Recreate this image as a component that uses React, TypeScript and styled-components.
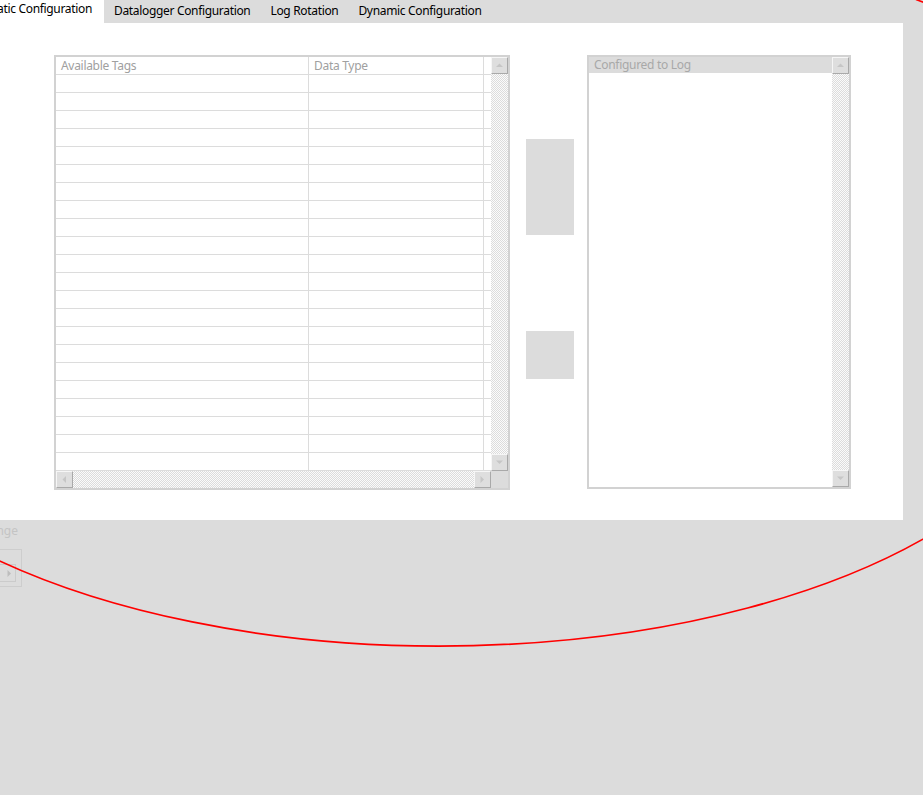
import React from 'react';
import styled, { createGlobalStyle, css } from 'styled-components';

const Global = createGlobalStyle`
  html, body { margin: 0; padding: 0; background: #dcdcdc; overflow: hidden; }
  body { font-family: "Noto Sans", "DejaVu Sans", sans-serif; font-size: 12px; }
  #root { width: 923px; height: 795px; position: relative; overflow: hidden; }
`;

const Page = styled.div`
  width: 923px;
  height: 795px;
  position: relative;
  display: flex;
  flex-direction: column;
  overflow: hidden;
`;

const TabBar = styled.div`
  display: flex;
  height: 23px;
  align-items: stretch;
`;

const Tab = styled.div<{ $active?: boolean }>`
  display: flex;
  align-items: flex-start;
  white-space: nowrap;
  color: #000;
  font-size: 12px;
  letter-spacing: -0.33px;
  line-height: 16px;
  box-sizing: border-box;
  ${(p) =>
    p.$active
      ? css`
          background: #fff;
          width: 104px;
          justify-content: flex-end;
          padding: 1px 12px 0 0;
          overflow: hidden;
        `
      : css`
          padding: 3px 10px 0 10px;
        `}
`;

const Panel = styled.div`
  width: 903px;
  height: 497px;
  box-sizing: border-box;
  background: #fff;
  padding: 32px 0 0 54px;
  display: flex;
  align-items: flex-start;
`;

const TableBox = styled.div`
  width: 456px;
  height: 435px;
  box-sizing: border-box;
  border: 2px solid #d2d2d2;
  display: grid;
  grid-template-columns: 435px 17px;
  grid-template-rows: 414px 17px;
  background: #fff;
`;

const Rows = styled.div`
  display: flex;
  flex-direction: column;
  overflow: hidden;
`;

const Row = styled.div`
  display: grid;
  grid-template-columns: 253px 175px 7px;
  height: 18px;
  flex: none;
`;

const Cell = styled.div<{ $last?: boolean }>`
  box-sizing: border-box;
  border-bottom: 1px solid #dcdcdc;
  border-right: ${(p) => (p.$last ? 'none' : '1px solid #dcdcdc')};
  padding-left: 5px;
  color: #a0a0a0;
  font-size: 12px;
  letter-spacing: -0.3px;
  line-height: 17px;
  white-space: nowrap;
  overflow: hidden;
`;

const checker = css`
  background-color: #fbfbfb;
  background-image: repeating-conic-gradient(#dcdcdc 0 25%, #fbfbfb 0 50%);
  background-size: 2px 2px;
`;

const VScroll = styled.div`
  display: flex;
  flex-direction: column;
`;

const HScroll = styled.div`
  display: flex;
  flex-direction: row;
`;

const Track = styled.div`
  flex: 1;
  ${checker}
`;

const ScrollButton = styled.div`
  width: 17px;
  height: 17px;
  flex: none;
  box-sizing: border-box;
  background: #dedede;
  border: 1px solid;
  border-color: #f6f6f6 #a9a9a9 #a9a9a9 #f6f6f6;
  display: flex;
  align-items: center;
  justify-content: center;
`;

const Corner = styled.div`
  background: #dcdcdc;
`;

const Middle = styled.div`
  margin: 0 13px 0 16px;
  padding-top: 84px;
  display: flex;
  flex-direction: column;
  gap: 96px;
`;

const GreyButton = styled.div<{ $h: number }>`
  width: 48px;
  height: ${(p) => p.$h}px;
  background: #dcdcdc;
`;

const ListBox = styled.div`
  width: 264px;
  height: 434px;
  box-sizing: border-box;
  border: 2px solid #d2d2d2;
  display: grid;
  grid-template-columns: 243px 17px;
  grid-template-rows: 430px;
  background: #fff;
`;

const ListArea = styled.div`
  display: flex;
  flex-direction: column;
`;

const ListHeader = styled.div`
  height: 16px;
  background: #dcdcdc;
  color: #a8a8a8;
  padding-left: 5px;
  font-size: 12px;
  letter-spacing: -0.3px;
  line-height: 16px;
  white-space: nowrap;
`;

const Bottom = styled.div`
  display: flex;
  flex-direction: column;
  width: 22px;
`;

const FadedLabel = styled.div`
  width: 18px;
  margin-top: 3px;
  display: flex;
  justify-content: flex-end;
  overflow: hidden;
  white-space: nowrap;
  color: #c4c4c4;
  font-size: 12px;
  line-height: 16px;
`;

const Frame = styled.div`
  margin-top: 10px;
  width: 22px;
  height: 38px;
  box-sizing: border-box;
  border: 1px solid #cdcdcd;
  border-left: none;
  padding-top: 14px;
`;

const SpinButton = styled.div`
  width: 16px;
  height: 18px;
  box-sizing: border-box;
  border: 1px solid #cbcbcb;
  border-left: none;
  display: flex;
  align-items: center;
  justify-content: flex-end;
  padding-right: 3px;
`;

const Overlay = styled.svg`
  position: absolute;
  left: 0;
  top: 0;
  pointer-events: none;
`;

type Dir = 'up' | 'down' | 'left' | 'right';

const Arrow: React.FC<{ dir: Dir; color?: string }> = ({ dir, color = '#c6c6c6' }) => {
  const pts: Record<Dir, string> = {
    up: '0,4 7,4 3.5,0.5',
    down: '0,0.5 7,0.5 3.5,4',
    left: '4,0 4,7 0.5,3.5',
    right: '0.5,0 0.5,7 4,3.5',
  };
  const vertical = dir === 'up' || dir === 'down';
  return (
    <svg width={vertical ? 7 : 5} height={vertical ? 5 : 7} viewBox={vertical ? '0 0 7 5' : '0 0 5 7'}>
      <polygon points={pts[dir]} fill={color} />
    </svg>
  );
};

const ROWS = 22;

export default function App() {
  return (
    <>
      <Global />
      <Page>
        <TabBar>
          <Tab $active>Static Configuration</Tab>
          <Tab>Datalogger Configuration</Tab>
          <Tab>Log Rotation</Tab>
          <Tab>Dynamic Configuration</Tab>
        </TabBar>
        <Panel>
          <TableBox>
            <Rows>
              <Row>
                <Cell>Available Tags</Cell>
                <Cell>Data Type</Cell>
                <Cell $last />
              </Row>
              {Array.from({ length: ROWS }).map((_, i) => (
                <Row key={i}>
                  <Cell />
                  <Cell />
                  <Cell $last />
                </Row>
              ))}
            </Rows>
            <VScroll>
              <ScrollButton>
                <Arrow dir="up" />
              </ScrollButton>
              <Track />
              <ScrollButton>
                <Arrow dir="down" />
              </ScrollButton>
            </VScroll>
            <HScroll>
              <ScrollButton>
                <Arrow dir="left" />
              </ScrollButton>
              <Track />
              <ScrollButton>
                <Arrow dir="right" />
              </ScrollButton>
            </HScroll>
            <Corner />
          </TableBox>
          <Middle>
            <GreyButton $h={96} />
            <GreyButton $h={48} />
          </Middle>
          <ListBox>
            <ListArea>
              <ListHeader>Configured to Log</ListHeader>
            </ListArea>
            <VScroll>
              <ScrollButton>
                <Arrow dir="up" />
              </ScrollButton>
              <Track />
              <ScrollButton>
                <Arrow dir="down" />
              </ScrollButton>
            </VScroll>
          </ListBox>
        </Panel>
        <Bottom>
          <FadedLabel>Range</FadedLabel>
          <Frame>
            <SpinButton>
              <Arrow dir="right" color="#bdbdbd" />
            </SpinButton>
          </Frame>
        </Bottom>
        <Overlay width={923} height={795} viewBox="0 0 923 795">
          <path
            d="M -20 551.4 A 631 300 0 0 0 943 527.2"
            fill="none"
            stroke="#ff0000"
            strokeWidth={1.7}
          />
          <path d="M 916 -0.5 L 924 2.6" fill="none" stroke="#ff0000" strokeWidth={1.7} />
        </Overlay>
      </Page>
    </>
  );
}
